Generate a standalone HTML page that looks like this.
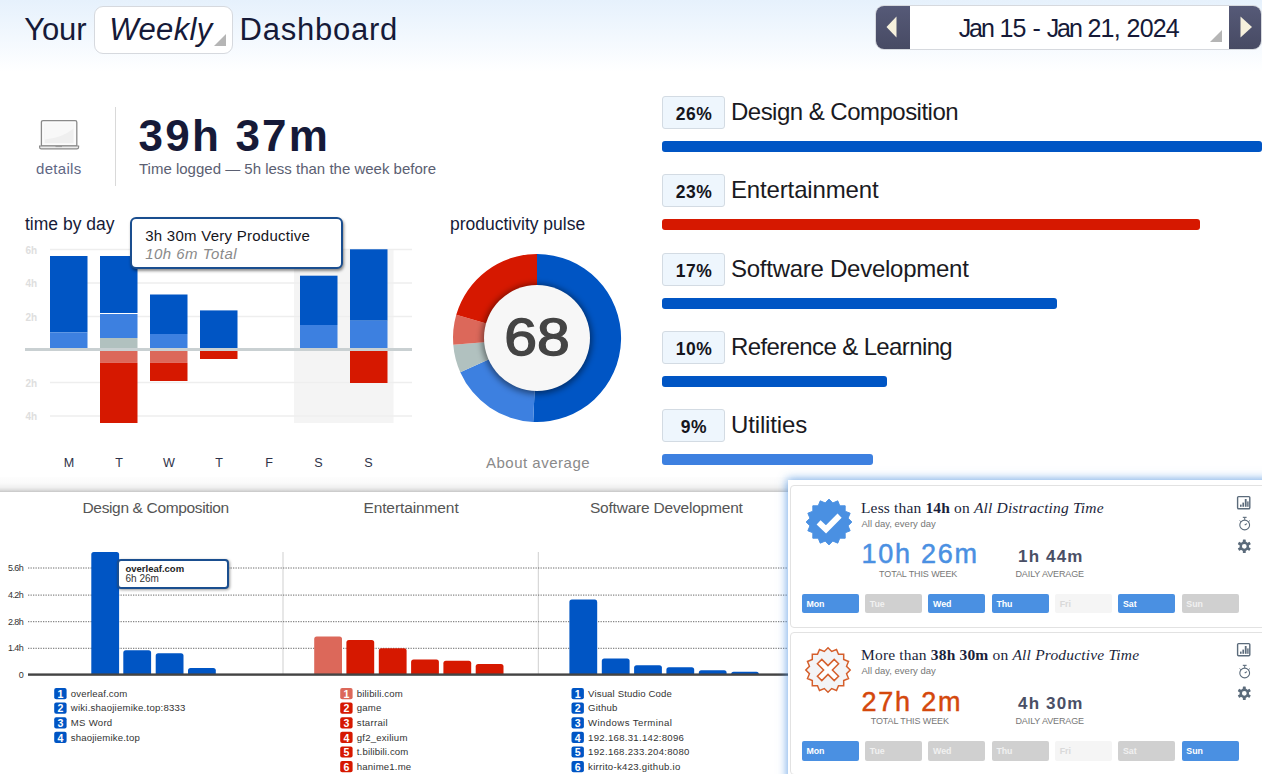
<!DOCTYPE html>
<html lang="en">
<head>
<meta charset="utf-8">
<title>Your Weekly Dashboard</title>
<style>
*{box-sizing:border-box;margin:0;padding:0}
html,body{width:1262px;height:774px;overflow:hidden;background:#fff}
body{position:relative;font-family:"Liberation Sans",sans-serif;color:#161a38}
.abs{position:absolute;white-space:nowrap}
#topgrad{left:0;top:0;width:1262px;height:72px;background:linear-gradient(#e6f1fc 0,#f2f8fe 50%,#fff 100%)}
/* header */
.h1{font-size:31px;line-height:36px;color:#161a38}
#wk{left:94.3px;top:6px;width:138.5px;height:47.5px;border:1px solid #d6d9de;border-radius:9px;background:#fff}
.tri{width:0;height:0;border-style:solid;border-width:0 0 12px 12px;border-color:transparent transparent #b5b5b5 transparent}
#datebox{left:875px;top:4.6px;width:387px;height:45.4px;border-radius:9px;background:#fff;border:1px solid #d6d9de;overflow:hidden}
.navb{top:-1px;width:35px;height:45px;background:linear-gradient(#565a78,#474a63)}
/* summary */
#big{left:138.6px;top:108.6px;font-size:44px;line-height:54px;font-weight:bold;color:#161a38;letter-spacing:2.2px}
#sub{left:139px;top:160px;font-size:15px;line-height:18px;color:#5b6072}
#det{left:36px;top:160px;font-size:15px;line-height:18px;color:#5f6784;letter-spacing:.3px}
#vline{left:115px;top:107px;width:1px;height:79px;background:#d9d9d9}
.lbl{font-size:17.5px;line-height:20px;color:#161a38}
/* categories */
.pct{left:662px;width:63px;height:33px;border:1px solid #d3dbe3;border-radius:3px;background:#eef6fd;font-size:17.5px;font-weight:bold;line-height:34px;text-align:center;color:#15151c;letter-spacing:.5px;padding-left:1px}
.cat{left:731px;font-size:24px;line-height:30px;color:#1a1a22}
.cbar{left:662px;height:11px;border-radius:3px}
</style>
</head>
<body>
<div id="topgrad" class="abs"></div>

<!-- header -->
<div class="abs h1" style="left:24.2px;top:12.3px;letter-spacing:-.1px">Your</div>
<div id="wk" class="abs"><div class="abs h1" style="left:14px;top:5.3px;font-style:italic;letter-spacing:.4px">Weekly</div><div class="abs tri" style="left:119px;top:27px"></div></div>
<div class="abs h1" style="left:239.6px;top:12.3px;letter-spacing:.75px">Dashboard</div>

<div id="datebox" class="abs">
  <div class="abs navb" style="left:-1px;width:35px"><svg class="abs" style="left:10px;top:10px" width="14" height="24" viewBox="0 0 14 24"><path d="M11.5 1.5 L1.5 12 L11.5 22.5 Z" fill="#f6f0dc"/></svg></div>
  <div class="abs" id="dt" style="left:82.7px;top:7.8px;font-size:25px;line-height:30px;color:#161a38;letter-spacing:-.8px;word-spacing:.6px"><span style="letter-spacing:-2.1px">Jan</span> 15 - <span style="letter-spacing:-2.1px">Jan</span> 21, 2024</div>
  <div class="abs tri" style="left:334px;top:24px"></div>
  <div class="abs navb" style="left:353px;width:34px"><svg class="abs" style="left:10px;top:10px" width="14" height="24" viewBox="0 0 14 24"><path d="M1.5 1.5 L13 12 L1.5 22.5 Z" fill="#f6f0dc"/></svg></div>
</div>

<!-- summary -->
<svg class="abs" style="left:38px;top:118px" width="42" height="34" viewBox="0 0 42 34">
  <path d="M3.4 28 V4.2 Q3.4 2.6 5 2.6 H37.2 Q38.8 2.6 38.8 4.2 V28 Z" fill="#fbfbfb" stroke="#8a8a8a" stroke-width="1.3"/>
  <rect x="6.6" y="5.8" width="29" height="19.4" fill="#efefef"/>
  <path d="M6.6 5.8 H35.6 V10.5 Q24 20 6.6 21.5 Z" fill="#f8f8f8"/>
  <path d="M1.6 28 H40.6 V29.2 Q40.6 30.9 38.9 30.9 H3.3 Q1.6 30.9 1.6 29.2 Z" fill="#ececec" stroke="#8a8a8a" stroke-width="1.2"/>
  <rect x="17.5" y="27.6" width="6.5" height="1.5" fill="#9a9a9a"/>
</svg>
<div id="det" class="abs">details</div>
<div id="vline" class="abs"></div>
<div id="big" class="abs">39h 37m</div>
<div id="sub" class="abs">Time logged — 5h less than the week before</div>

<div class="abs lbl" style="left:25px;top:213.6px">time by day</div>
<div class="abs lbl" style="left:450px;top:213.6px">productivity pulse</div>

<!-- categories -->
<div class="abs pct" style="top:96px">26%</div><div class="abs cat" style="top:97px;letter-spacing:-.52px">Design &amp; Composition</div><div class="abs cbar" style="top:141px;width:600px;background:#0055c4"></div>
<div class="abs pct" style="top:174px">23%</div><div class="abs cat" style="top:175px;letter-spacing:-.15px">Entertainment</div><div class="abs cbar" style="top:219px;width:538px;background:#d61800"></div>
<div class="abs pct" style="top:252.5px">17%</div><div class="abs cat" style="top:253.5px;letter-spacing:-.26px">Software Development</div><div class="abs cbar" style="top:297.5px;width:395px;background:#0055c4"></div>
<div class="abs pct" style="top:331px">10%</div><div class="abs cat" style="top:332px;letter-spacing:-.62px">Reference &amp; Learning</div><div class="abs cbar" style="top:376px;width:225px;background:#0055c4"></div>
<div class="abs pct" style="top:409px">9%</div><div class="abs cat" style="top:410px;letter-spacing:-.15px">Utilities</div><div class="abs cbar" style="top:454px;width:211px;background:#3d80e0"></div>

<!-- time by day -->
<svg class="abs" style="left:0;top:205px" width="440" height="280" viewBox="0 205 440 280" font-family="Liberation Sans, sans-serif">
<rect x="294" y="249" width="99.5" height="174" fill="#f4f4f4"/>
<rect x="50" y="248.75" width="362" height="1.5" fill="#eeeeee"/>
<rect x="50" y="282.25" width="362" height="1.5" fill="#eeeeee"/>
<rect x="50" y="315.75" width="362" height="1.5" fill="#eeeeee"/>
<rect x="50" y="381.75" width="362" height="1.5" fill="#eeeeee"/>
<rect x="50" y="415.25" width="362" height="1.5" fill="#eeeeee"/>
<text x="25.5" y="253.5" font-size="10" font-weight="bold" fill="#dedede">6h</text>
<text x="25.5" y="287" font-size="10" font-weight="bold" fill="#dedede">4h</text>
<text x="25.5" y="320.5" font-size="10" font-weight="bold" fill="#dedede">2h</text>
<text x="25.5" y="386.5" font-size="10" font-weight="bold" fill="#dedede">2h</text>
<text x="25.5" y="420" font-size="10" font-weight="bold" fill="#dedede">4h</text>
<rect x="50" y="256" width="37.5" height="76.3" fill="#0055c4"/>
<rect x="50" y="332.3" width="37.5" height="16.7" fill="#3d80e0"/>
<rect x="100" y="256" width="37.5" height="57" fill="#0055c4"/>
<rect x="100" y="314" width="37.5" height="24" fill="#3d80e0"/>
<rect x="100" y="338" width="37.5" height="11" fill="#b1c1bf"/>
<rect x="100" y="350" width="37.5" height="12.8" fill="#dc685a"/>
<rect x="100" y="362.8" width="37.5" height="60.2" fill="#d61800"/>
<rect x="150" y="294.5" width="37.5" height="39.5" fill="#0055c4"/>
<rect x="150" y="334" width="37.5" height="15" fill="#3d80e0"/>
<rect x="150" y="350" width="37.5" height="12.8" fill="#dc685a"/>
<rect x="150" y="362.8" width="37.5" height="18.2" fill="#d61800"/>
<rect x="200" y="310.4" width="37.5" height="38.6" fill="#0055c4"/>
<rect x="200" y="350" width="37.5" height="9" fill="#d61800"/>
<rect x="300" y="275.7" width="37.5" height="49.3" fill="#0055c4"/>
<rect x="300" y="325" width="37.5" height="24" fill="#3d80e0"/>
<rect x="350" y="249.3" width="37.5" height="71.4" fill="#0055c4"/>
<rect x="350" y="320.7" width="37.5" height="28.3" fill="#3d80e0"/>
<rect x="350" y="350" width="37.5" height="33" fill="#d61800"/>
<rect x="25" y="348" width="387" height="3" fill="#c9d0d2"/>
<text x="69" y="466.5" font-size="12.6" text-anchor="middle" fill="#2e3248">M</text>
<text x="119" y="466.5" font-size="12.6" text-anchor="middle" fill="#2e3248">T</text>
<text x="169" y="466.5" font-size="12.6" text-anchor="middle" fill="#2e3248">W</text>
<text x="219" y="466.5" font-size="12.6" text-anchor="middle" fill="#2e3248">T</text>
<text x="269" y="466.5" font-size="12.6" text-anchor="middle" fill="#2e3248">F</text>
<text x="318.5" y="466.5" font-size="12.6" text-anchor="middle" fill="#2e3248">S</text>
<text x="368.5" y="466.5" font-size="12.6" text-anchor="middle" fill="#2e3248">S</text>
</svg>
<div class="abs" id="tip1" style="left:130.2px;top:217px;width:212.8px;height:51.5px;border:2px solid #1a4e8f;border-radius:6px;background:#fff;box-shadow:1px 2px 3px rgba(0,0,0,.45)"><div class="abs" style="left:13px;top:8.4px;font-size:15px;line-height:18px;color:#15151c;letter-spacing:.26px" id="tt1">3h 30m Very Productive</div><div class="abs" style="left:13px;top:26.4px;font-size:15px;line-height:18px;font-style:italic;color:#8a8a8a;letter-spacing:.48px" id="tt2">10h 6m Total</div></div>
<!-- pulse -->
<svg class="abs" style="left:440px;top:240px" width="200" height="200" viewBox="440 240 200 200" font-family="Liberation Sans, sans-serif">
<defs><filter id="ds" x="-30%" y="-30%" width="160%" height="160%"><feGaussianBlur stdDeviation="3"/></filter></defs>
<path d="M537.00 254.00 A84 84 0 1 1 533.19 421.91 L534.73 387.95 A50 50 0 1 0 537.00 288.00 Z" fill="#0055c4"/>
<path d="M533.19 421.91 A84 84 0 0 1 460.26 372.17 L491.32 358.34 A50 50 0 0 0 534.73 387.95 Z" fill="#3d80e0"/>
<path d="M460.26 372.17 A84 84 0 0 1 453.27 344.74 L487.16 342.01 A50 50 0 0 0 491.32 358.34 Z" fill="#b1c1bf"/>
<path d="M453.27 344.74 A84 84 0 0 1 456.25 314.85 L488.94 324.22 A50 50 0 0 0 487.16 342.01 Z" fill="#dc685a"/>
<path d="M456.25 314.85 A84 84 0 0 1 537.00 254.00 L537.00 288.00 A50 50 0 0 0 488.94 324.22 Z" fill="#d61800"/>
<circle cx="537" cy="339" r="55" fill="rgba(0,0,0,.45)" filter="url(#ds)"/>
<circle cx="537" cy="338" r="53" fill="#f7f7f7"/>
<text x="537" y="355" font-size="52" text-anchor="middle" fill="#444" stroke="#444" stroke-width="1.4" textLength="65.5" lengthAdjust="spacingAndGlyphs" id="pulse">68</text>
</svg>
<div class="abs" id="avg" style="left:486px;top:454px;font-size:15px;line-height:18px;color:#8a8a8a;letter-spacing:.5px">About average</div>

<!-- app charts -->
<div class="abs" style="left:0;top:477px;width:1262px;height:14.5px;background:linear-gradient(rgba(0,0,0,.006) 0,rgba(0,0,0,.02) 40%,rgba(0,0,0,.06) 69%,rgba(0,0,0,.13) 86%,rgba(0,0,0,.225) 100%)"></div>
<div class="abs" style="left:0;top:491.5px;width:1262px;height:290px;background:#fff"></div>
<svg class="abs" style="left:0;top:492px" width="800" height="282" viewBox="0 492 800 282" font-family="Liberation Sans, sans-serif">
<text class="ct" x="155.7" y="513.3" font-size="15.5" text-anchor="middle" fill="#555" letter-spacing="-0.35">Design &amp; Composition</text>
<text class="ct" x="411" y="513.3" font-size="15.5" text-anchor="middle" fill="#555" letter-spacing="-0.1">Entertainment</text>
<text class="ct" x="666.3" y="513.3" font-size="15.5" text-anchor="middle" fill="#555" letter-spacing="-0.2">Software Development</text>
<rect x="282.5" y="552" width="1" height="122" fill="#cfcfcf"/>
<rect x="537.8" y="552" width="1" height="122" fill="#cfcfcf"/>
<line x1="28" x2="800" y1="568" y2="568" stroke="#6a6a6a" stroke-width="1" stroke-dasharray="1.3 1.2"/>
<line x1="28" x2="800" y1="595.1" y2="595.1" stroke="#6a6a6a" stroke-width="1" stroke-dasharray="1.3 1.2"/>
<line x1="28" x2="800" y1="621.7" y2="621.7" stroke="#6a6a6a" stroke-width="1" stroke-dasharray="1.3 1.2"/>
<line x1="28" x2="800" y1="648.3" y2="648.3" stroke="#6a6a6a" stroke-width="1" stroke-dasharray="1.3 1.2"/>
<text x="23.3" y="571.2" font-size="9" text-anchor="end" fill="#333" letter-spacing="-0.55">5.6h</text>
<text x="23.3" y="597.9000000000001" font-size="9" text-anchor="end" fill="#333" letter-spacing="-0.55">4.2h</text>
<text x="23.3" y="624.6" font-size="9" text-anchor="end" fill="#333" letter-spacing="-0.55">2.8h</text>
<text x="23.3" y="651.3000000000001" font-size="9" text-anchor="end" fill="#333" letter-spacing="-0.55">1.4h</text>
<text x="23.3" y="677.9000000000001" font-size="9" text-anchor="end" fill="#333" letter-spacing="-0.55">0</text>
<path d="M91.3 674.5 V554.5 Q91.3 552 93.8 552 H116.6 Q119.1 552 119.1 554.5 V674.5 Z" fill="#0055c4"/>
<path d="M123.3 674.5 V652.7 Q123.3 650.2 125.8 650.2 H148.6 Q151.1 650.2 151.1 652.7 V674.5 Z" fill="#0055c4"/>
<path d="M155.7 674.5 V655.8 Q155.7 653.3 158.2 653.3 H181.0 Q183.5 653.3 183.5 655.8 V674.5 Z" fill="#0055c4"/>
<path d="M188 674.5 V670.5 Q188 668 190.5 668 H213.3 Q215.8 668 215.8 670.5 V674.5 Z" fill="#0055c4"/>
<path d="M314.2 674.5 V638.9 Q314.2 636.4 316.7 636.4 H339.5 Q342.0 636.4 342.0 638.9 V674.5 Z" fill="#dc685a"/>
<path d="M346.4 674.5 V642.5 Q346.4 640 348.9 640 H371.7 Q374.2 640 374.2 642.5 V674.5 Z" fill="#d61800"/>
<path d="M378.8 674.5 V650.8 Q378.8 648.3 381.3 648.3 H404.1 Q406.6 648.3 406.6 650.8 V674.5 Z" fill="#d61800"/>
<path d="M411.1 674.5 V662.1 Q411.1 659.6 413.6 659.6 H436.4 Q438.9 659.6 438.9 662.1 V674.5 Z" fill="#d61800"/>
<path d="M443.4 674.5 V663.2 Q443.4 660.7 445.9 660.7 H468.7 Q471.2 660.7 471.2 663.2 V674.5 Z" fill="#d61800"/>
<path d="M475.7 674.5 V666.5 Q475.7 664 478.2 664 H501.0 Q503.5 664 503.5 666.5 V674.5 Z" fill="#d61800"/>
<path d="M569.4 674.5 V602.1 Q569.4 599.6 571.9 599.6 H595.1 Q597.2 599.6 597.2 602.1 V674.5 Z" fill="#0055c4"/>
<path d="M601.8 674.5 V661.0 Q601.8 658.5 604.3 658.5 H627.1 Q629.6 658.5 629.6 661.0 V674.5 Z" fill="#0055c4"/>
<path d="M634.1 674.5 V667.7 Q634.1 665.2 636.6 665.2 H659.4 Q661.9 665.2 661.9 667.7 V674.5 Z" fill="#0055c4"/>
<path d="M666.4 674.5 V669.8 Q666.4 667.3 668.9 667.3 H691.7 Q694.2 667.3 694.2 669.8 V674.5 Z" fill="#0055c4"/>
<path d="M698.8 674.5 V672.8 Q698.8 670.3 701.3 670.3 H724.1 Q726.6 670.3 726.6 672.8 V674.5 Z" fill="#0055c4"/>
<path d="M731.1 674.5 V674.3 Q731.1 671.8 733.6 671.8 H756.4 Q758.9 671.8 758.9 674.3 V674.5 Z" fill="#0055c4"/>
<rect x="28" y="673.4" width="772" height="2.4" fill="#444"/>
<rect x="54.2" y="688.0" width="12.4" height="11.2" rx="2" fill="#0055c4"/>
<text x="60.400000000000006" y="697.7" font-size="10.6" font-weight="bold" text-anchor="middle" fill="#fff">1</text>
<text class="lg" x="70.80000000000001" y="696.8" font-size="9.6" fill="#333" textLength="56.4">overleaf.com</text>
<rect x="54.2" y="702.6" width="12.4" height="11.2" rx="2" fill="#0055c4"/>
<text x="60.400000000000006" y="712.3" font-size="10.6" font-weight="bold" text-anchor="middle" fill="#fff">2</text>
<text class="lg" x="70.80000000000001" y="711.4" font-size="9.6" fill="#333" textLength="114.6">wiki.shaojiemike.top:8333</text>
<rect x="54.2" y="717.2" width="12.4" height="11.2" rx="2" fill="#0055c4"/>
<text x="60.400000000000006" y="726.9" font-size="10.6" font-weight="bold" text-anchor="middle" fill="#fff">3</text>
<text class="lg" x="70.80000000000001" y="726.0" font-size="9.6" fill="#333" textLength="41.4">MS Word</text>
<rect x="54.2" y="731.8" width="12.4" height="11.2" rx="2" fill="#0055c4"/>
<text x="60.400000000000006" y="741.5" font-size="10.6" font-weight="bold" text-anchor="middle" fill="#fff">4</text>
<text class="lg" x="70.80000000000001" y="740.6" font-size="9.6" fill="#333" textLength="69">shaojiemike.top</text>
<rect x="340.2" y="688.0" width="12.4" height="11.2" rx="2" fill="#dc685a"/>
<text x="346.4" y="697.7" font-size="10.6" font-weight="bold" text-anchor="middle" fill="#fff">1</text>
<text class="lg" x="356.8" y="696.8" font-size="9.6" fill="#333" textLength="45.9">bilibili.com</text>
<rect x="340.2" y="702.6" width="12.4" height="11.2" rx="2" fill="#d61800"/>
<text x="346.4" y="712.3" font-size="10.6" font-weight="bold" text-anchor="middle" fill="#fff">2</text>
<text class="lg" x="356.8" y="711.4" font-size="9.6" fill="#333" textLength="24.5">game</text>
<rect x="340.2" y="717.2" width="12.4" height="11.2" rx="2" fill="#d61800"/>
<text x="346.4" y="726.9" font-size="10.6" font-weight="bold" text-anchor="middle" fill="#fff">3</text>
<text class="lg" x="356.8" y="726.0" font-size="9.6" fill="#333" textLength="30.8">starrail</text>
<rect x="340.2" y="731.8" width="12.4" height="11.2" rx="2" fill="#d61800"/>
<text x="346.4" y="741.5" font-size="10.6" font-weight="bold" text-anchor="middle" fill="#fff">4</text>
<text class="lg" x="356.8" y="740.6" font-size="9.6" fill="#333" textLength="50.6">gf2_exilium</text>
<rect x="340.2" y="746.4" width="12.4" height="11.2" rx="2" fill="#d61800"/>
<text x="346.4" y="756.1" font-size="10.6" font-weight="bold" text-anchor="middle" fill="#fff">5</text>
<text class="lg" x="356.8" y="755.2" font-size="9.6" fill="#333" textLength="51.5">t.bilibili.com</text>
<rect x="340.2" y="761.0" width="12.4" height="11.2" rx="2" fill="#d61800"/>
<text x="346.4" y="770.7" font-size="10.6" font-weight="bold" text-anchor="middle" fill="#fff">6</text>
<text class="lg" x="356.8" y="769.8" font-size="9.6" fill="#333" textLength="54.4">hanime1.me</text>
<rect x="571.5" y="688.0" width="12.4" height="11.2" rx="2" fill="#0055c4"/>
<text x="577.7" y="697.7" font-size="10.6" font-weight="bold" text-anchor="middle" fill="#fff">1</text>
<text class="lg" x="588.1" y="696.8" font-size="9.6" fill="#333" textLength="83.7">Visual Studio Code</text>
<rect x="571.5" y="702.6" width="12.4" height="11.2" rx="2" fill="#0055c4"/>
<text x="577.7" y="712.3" font-size="10.6" font-weight="bold" text-anchor="middle" fill="#fff">2</text>
<text class="lg" x="588.1" y="711.4" font-size="9.6" fill="#333" textLength="29.3">Github</text>
<rect x="571.5" y="717.2" width="12.4" height="11.2" rx="2" fill="#0055c4"/>
<text x="577.7" y="726.9" font-size="10.6" font-weight="bold" text-anchor="middle" fill="#fff">3</text>
<text class="lg" x="588.1" y="726.0" font-size="9.6" fill="#333" textLength="83.7">Windows Terminal</text>
<rect x="571.5" y="731.8" width="12.4" height="11.2" rx="2" fill="#0055c4"/>
<text x="577.7" y="741.5" font-size="10.6" font-weight="bold" text-anchor="middle" fill="#fff">4</text>
<text class="lg" x="588.1" y="740.6" font-size="9.6" fill="#333" textLength="95.8">192.168.31.142:8096</text>
<rect x="571.5" y="746.4" width="12.4" height="11.2" rx="2" fill="#0055c4"/>
<text x="577.7" y="756.1" font-size="10.6" font-weight="bold" text-anchor="middle" fill="#fff">5</text>
<text class="lg" x="588.1" y="755.2" font-size="9.6" fill="#333" textLength="101.3">192.168.233.204:8080</text>
<rect x="571.5" y="761.0" width="12.4" height="11.2" rx="2" fill="#0055c4"/>
<text x="577.7" y="770.7" font-size="10.6" font-weight="bold" text-anchor="middle" fill="#fff">6</text>
<text class="lg" x="588.1" y="769.8" font-size="9.6" fill="#333" textLength="92.2">kirrito-k423.github.io</text>
</svg>
<div class="abs" id="tip2" style="left:116.5px;top:559px;width:112.5px;height:29.5px;border:2px solid #1a4e8f;border-radius:4px;background:#fff;box-shadow:1px 1px 3px rgba(0,0,0,.4)"><div class="abs" id="t2a" style="left:7px;top:2.4px;font-size:9.5px;line-height:11px;font-weight:bold;color:#222">overleaf.com</div><div class="abs" id="t2b" style="left:7px;top:12.2px;font-size:10px;line-height:11px;color:#333">6h 26m</div></div>

<!-- goals -->
<div class="abs" id="goals" style="left:788px;top:479.5px;width:500px;height:320px;background:#fff;box-shadow:0 0 9px 1px rgba(74,144,226,.75)"></div>
<div class="abs card" style="left:789.8px;top:485px;width:501px;height:142.5px;border:1px solid #e2e2e2;border-radius:4px;background:#fff"><div class="abs" style="left:.7px;top:0;width:0;height:0">
<svg class="abs" style="left:12.3px;top:11.2px" width="50" height="50" viewBox="0 0 50 50"><polygon points="25.00,2.10 28.78,5.97 33.76,3.84 35.78,8.87 41.19,8.81 41.13,14.22 46.16,16.24 44.03,21.22 47.90,25.00 44.03,28.78 46.16,33.76 41.13,35.78 41.19,41.19 35.78,41.13 33.76,46.16 28.78,44.03 25.00,47.90 21.22,44.03 16.24,46.16 14.22,41.13 8.81,41.19 8.87,35.78 3.84,33.76 5.97,28.78 2.10,25.00 5.97,21.22 3.84,16.24 8.87,14.22 8.81,8.81 14.22,8.87 16.24,3.84 21.22,5.97" fill="#4a90e2" stroke="#4a90e2" stroke-width="1" stroke-linejoin="round"/><path d="M14.6 25.3 L22 32.4 L35.6 18.6" fill="none" stroke="#fff" stroke-width="5.8" stroke-linecap="butt" stroke-linejoin="miter"/></svg>
<div class="abs gt" style="left:69.5px;top:11.6px;font-family:'Liberation Serif',serif;font-size:15.5px;line-height:20px;color:#1b1f3b;letter-spacing:.16px">Less than <b>14h</b> on <i>All Distracting Time</i></div>
<div class="abs gs" style="left:70px;top:32px;font-size:9.5px;line-height:12px;color:#777">All day, every day</div>
<div class="abs gb" style="left:70px;top:51px;font-size:27px;line-height:34px;color:#4a90e2;letter-spacing:1.75px;-webkit-text-stroke:.5px #4a90e2">10h 26m</div>
<div class="abs gl1" style="left:87.6px;top:81.5px;font-size:9px;line-height:12px;color:#777;letter-spacing:-.1px">TOTAL THIS WEEK</div>
<div class="abs ga" style="left:226.6px;top:58.6px;font-size:17px;line-height:24px;font-weight:bold;color:#4a4f66;letter-spacing:1.15px">1h 44m</div>
<div class="abs gl2" style="left:224px;top:81.5px;font-size:9px;line-height:12px;color:#777;letter-spacing:-.12px">DAILY AVERAGE</div>
<div class="abs day" style="left:10.4px;top:108px;width:56.9px;height:19.3px;border-radius:2px;background:#4a90e2;color:#fff;font-size:8.8px;font-weight:bold;line-height:20.5px;padding-left:4.5px;overflow:hidden">Mon</div>
<div class="abs day" style="left:73.7px;top:108px;width:56.9px;height:19.3px;border-radius:2px;background:#d0d0d0;color:#f1f1f1;font-size:8.8px;font-weight:bold;line-height:20.5px;padding-left:4.5px;overflow:hidden">Tue</div>
<div class="abs day" style="left:137.0px;top:108px;width:56.9px;height:19.3px;border-radius:2px;background:#4a90e2;color:#fff;font-size:8.8px;font-weight:bold;line-height:20.5px;padding-left:4.5px;overflow:hidden">Wed</div>
<div class="abs day" style="left:200.4px;top:108px;width:56.9px;height:19.3px;border-radius:2px;background:#4a90e2;color:#fff;font-size:8.8px;font-weight:bold;line-height:20.5px;padding-left:4.5px;overflow:hidden">Thu</div>
<div class="abs day" style="left:263.7px;top:108px;width:56.9px;height:19.3px;border-radius:2px;background:#f5f5f5;color:#d9d9d9;font-size:8.8px;font-weight:bold;line-height:20.5px;padding-left:4.5px;overflow:hidden">Fri</div>
<div class="abs day" style="left:327.0px;top:108px;width:56.9px;height:19.3px;border-radius:2px;background:#4a90e2;color:#fff;font-size:8.8px;font-weight:bold;line-height:20.5px;padding-left:4.5px;overflow:hidden">Sat</div>
<div class="abs day" style="left:390.3px;top:108px;width:56.9px;height:19.3px;border-radius:2px;background:#d0d0d0;color:#f1f1f1;font-size:8.8px;font-weight:bold;line-height:20.5px;padding-left:4.5px;overflow:hidden">Sun</div>
<svg class="abs" style="left:444.7px;top:8.7px" width="16" height="16" viewBox="0 0 16 16"><rect x="1.6" y="1.6" width="12.2" height="12.2" rx="1" fill="none" stroke="#5b6b7b" stroke-width="1.4"/><rect x="4" y="9.6" width="1.6" height="2.2" fill="#5b6b7b"/><rect x="6.4" y="7.6" width="1.6" height="4.2" fill="#5b6b7b"/><rect x="8.8" y="4" width="1.8" height="7.8" fill="#5b6b7b"/><rect x="11.2" y="6.4" width="1.4" height="5.4" fill="#5b6b7b"/></svg>
<svg class="abs" style="left:445.1px;top:30.2px" width="16" height="16" viewBox="0 0 16 16"><circle cx="7.7" cy="9" r="4.9" fill="none" stroke="#5b6b7b" stroke-width="1.1"/><rect x="5.8" y="0.8" width="3.8" height="1.1" fill="#5b6b7b"/><rect x="7.2" y="1.5" width="1" height="2.4" fill="#5b6b7b"/><path d="M7.7 9 L10 7.6" stroke="#5b6b7b" stroke-width="1.1" fill="none"/><path d="M2.6 4.6 L3.8 5.6 M12.8 4.6 L11.6 5.6" stroke="#5b6b7b" stroke-width="1" fill="none"/></svg>
<svg class="abs" style="left:445.3px;top:52.6px" width="14.6" height="14.6" viewBox="0 0 16 16"><rect x="6.4" y="0.6" width="3.2" height="4" rx="0.5" transform="rotate(0 8 8)" fill="#5b6b7b"/><rect x="6.4" y="0.6" width="3.2" height="4" rx="0.5" transform="rotate(60 8 8)" fill="#5b6b7b"/><rect x="6.4" y="0.6" width="3.2" height="4" rx="0.5" transform="rotate(120 8 8)" fill="#5b6b7b"/><rect x="6.4" y="0.6" width="3.2" height="4" rx="0.5" transform="rotate(180 8 8)" fill="#5b6b7b"/><rect x="6.4" y="0.6" width="3.2" height="4" rx="0.5" transform="rotate(240 8 8)" fill="#5b6b7b"/><rect x="6.4" y="0.6" width="3.2" height="4" rx="0.5" transform="rotate(300 8 8)" fill="#5b6b7b"/><circle cx="8" cy="8" r="3.9" fill="none" stroke="#5b6b7b" stroke-width="2.6"/></svg>
</div></div>
<div class="abs card" style="left:789.8px;top:632.4px;width:501px;height:142.5px;border:1px solid #e2e2e2;border-radius:4px;background:#fff"><div class="abs" style="left:.7px;top:0;width:0;height:0">
<svg class="abs" style="left:11.5px;top:12.1px" width="50" height="50" viewBox="0 0 50 50"><polygon points="25.00,2.80 28.69,6.46 33.50,4.49 35.50,9.29 40.70,9.30 40.71,14.50 45.51,16.50 43.54,21.31 47.20,25.00 43.54,28.69 45.51,33.50 40.71,35.50 40.70,40.70 35.50,40.71 33.50,45.51 28.69,43.54 25.00,47.20 21.31,43.54 16.50,45.51 14.50,40.71 9.30,40.70 9.29,35.50 4.49,33.50 6.46,28.69 2.80,25.00 6.46,21.31 4.49,16.50 9.29,14.50 9.30,9.30 14.50,9.29 16.50,4.49 21.31,6.46" fill="#f3f4f6" stroke="#d55f2c" stroke-width="1.5" stroke-linejoin="miter"/><path d="M18.8 14.4 L25 20.6 L31.2 14.4 L35.6 18.8 L29.4 25 L35.6 31.2 L31.2 35.6 L25 29.4 L18.8 35.6 L14.4 31.2 L20.6 25 L14.4 18.8 Z" fill="#fff" stroke="#d55f2c" stroke-width="1.5" stroke-linejoin="miter"/></svg>
<div class="abs gt" style="left:69.5px;top:11.6px;font-family:'Liberation Serif',serif;font-size:15.5px;line-height:20px;color:#1b1f3b;letter-spacing:.18px">More than <b>38h 30m</b> on <i>All Productive Time</i></div>
<div class="abs gs" style="left:70px;top:32px;font-size:9.5px;line-height:12px;color:#777">All day, every day</div>
<div class="abs gb" style="left:70px;top:51.8px;font-size:27px;line-height:34px;color:#d4480c;letter-spacing:1.8px;-webkit-text-stroke:.5px #d4480c">27h 2m</div>
<div class="abs gl1" style="left:79.2px;top:81.5px;font-size:9px;line-height:12px;color:#777;letter-spacing:-.1px">TOTAL THIS WEEK</div>
<div class="abs ga" style="left:226.6px;top:58.6px;font-size:17px;line-height:24px;font-weight:bold;color:#4a4f66;letter-spacing:1.15px">4h 30m</div>
<div class="abs gl2" style="left:224px;top:81.5px;font-size:9px;line-height:12px;color:#777;letter-spacing:-.12px">DAILY AVERAGE</div>
<div class="abs day" style="left:10.4px;top:108px;width:56.9px;height:19.3px;border-radius:2px;background:#4a90e2;color:#fff;font-size:8.8px;font-weight:bold;line-height:20.5px;padding-left:4.5px;overflow:hidden">Mon</div>
<div class="abs day" style="left:73.7px;top:108px;width:56.9px;height:19.3px;border-radius:2px;background:#d0d0d0;color:#f1f1f1;font-size:8.8px;font-weight:bold;line-height:20.5px;padding-left:4.5px;overflow:hidden">Tue</div>
<div class="abs day" style="left:137.0px;top:108px;width:56.9px;height:19.3px;border-radius:2px;background:#d0d0d0;color:#f1f1f1;font-size:8.8px;font-weight:bold;line-height:20.5px;padding-left:4.5px;overflow:hidden">Wed</div>
<div class="abs day" style="left:200.4px;top:108px;width:56.9px;height:19.3px;border-radius:2px;background:#d0d0d0;color:#f1f1f1;font-size:8.8px;font-weight:bold;line-height:20.5px;padding-left:4.5px;overflow:hidden">Thu</div>
<div class="abs day" style="left:263.7px;top:108px;width:56.9px;height:19.3px;border-radius:2px;background:#f5f5f5;color:#d9d9d9;font-size:8.8px;font-weight:bold;line-height:20.5px;padding-left:4.5px;overflow:hidden">Fri</div>
<div class="abs day" style="left:327.0px;top:108px;width:56.9px;height:19.3px;border-radius:2px;background:#d0d0d0;color:#f1f1f1;font-size:8.8px;font-weight:bold;line-height:20.5px;padding-left:4.5px;overflow:hidden">Sat</div>
<div class="abs day" style="left:390.3px;top:108px;width:56.9px;height:19.3px;border-radius:2px;background:#4a90e2;color:#fff;font-size:8.8px;font-weight:bold;line-height:20.5px;padding-left:4.5px;overflow:hidden">Sun</div>
<svg class="abs" style="left:444.7px;top:8.7px" width="16" height="16" viewBox="0 0 16 16"><rect x="1.6" y="1.6" width="12.2" height="12.2" rx="1" fill="none" stroke="#5b6b7b" stroke-width="1.4"/><rect x="4" y="9.6" width="1.6" height="2.2" fill="#5b6b7b"/><rect x="6.4" y="7.6" width="1.6" height="4.2" fill="#5b6b7b"/><rect x="8.8" y="4" width="1.8" height="7.8" fill="#5b6b7b"/><rect x="11.2" y="6.4" width="1.4" height="5.4" fill="#5b6b7b"/></svg>
<svg class="abs" style="left:445.1px;top:30.2px" width="16" height="16" viewBox="0 0 16 16"><circle cx="7.7" cy="9" r="4.9" fill="none" stroke="#5b6b7b" stroke-width="1.1"/><rect x="5.8" y="0.8" width="3.8" height="1.1" fill="#5b6b7b"/><rect x="7.2" y="1.5" width="1" height="2.4" fill="#5b6b7b"/><path d="M7.7 9 L10 7.6" stroke="#5b6b7b" stroke-width="1.1" fill="none"/><path d="M2.6 4.6 L3.8 5.6 M12.8 4.6 L11.6 5.6" stroke="#5b6b7b" stroke-width="1" fill="none"/></svg>
<svg class="abs" style="left:445.3px;top:52.6px" width="14.6" height="14.6" viewBox="0 0 16 16"><rect x="6.4" y="0.6" width="3.2" height="4" rx="0.5" transform="rotate(0 8 8)" fill="#5b6b7b"/><rect x="6.4" y="0.6" width="3.2" height="4" rx="0.5" transform="rotate(60 8 8)" fill="#5b6b7b"/><rect x="6.4" y="0.6" width="3.2" height="4" rx="0.5" transform="rotate(120 8 8)" fill="#5b6b7b"/><rect x="6.4" y="0.6" width="3.2" height="4" rx="0.5" transform="rotate(180 8 8)" fill="#5b6b7b"/><rect x="6.4" y="0.6" width="3.2" height="4" rx="0.5" transform="rotate(240 8 8)" fill="#5b6b7b"/><rect x="6.4" y="0.6" width="3.2" height="4" rx="0.5" transform="rotate(300 8 8)" fill="#5b6b7b"/><circle cx="8" cy="8" r="3.9" fill="none" stroke="#5b6b7b" stroke-width="2.6"/></svg>
</div></div>

</body>
</html>
